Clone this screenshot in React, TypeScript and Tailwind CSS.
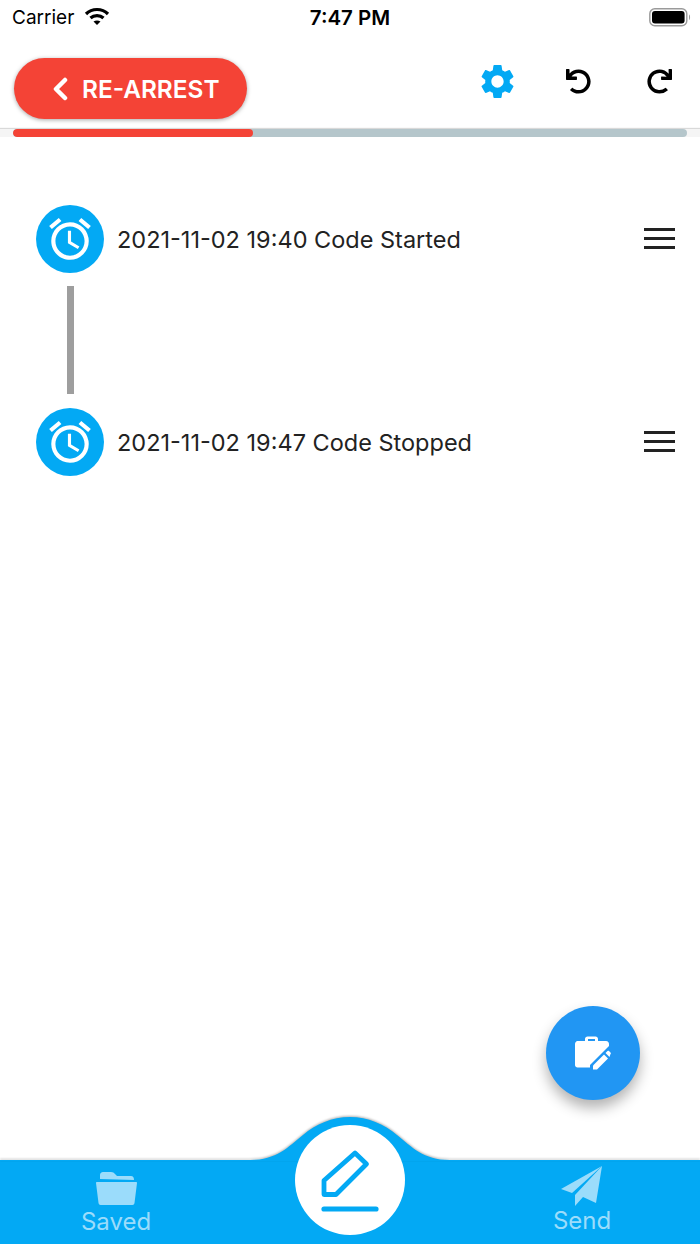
import { FaRedo, FaUndo } from "react-icons/fa";
import { MdAccessAlarm, MdSettings } from "react-icons/md";

const events = ["2021-11-02 19:40 Code Started", "2021-11-02 19:47 Code Stopped"];

function StatusBar() {
  return (
    <div className="relative flex h-[36px] items-center justify-between pl-3 pr-[9px] text-black font-['Inter',sans-serif]">
      <div className="flex items-center gap-[10px]">
        <span className="text-[19px] font-normal">Carrier</span>
        <svg width="26" height="19" viewBox="0 0 26 19" fill="none" stroke="black" strokeWidth="3.2" className="mb-1">
          <path d="M2 7 C8 1 18 1 24 7" />
          <path d="M6.5 11 C10 7.8 16 7.8 19.5 11" />
          <path d="M13 18 L9.5 14.6 C11.5 13 14.5 13 16.5 14.6 Z" fill="black" stroke="none" />
        </svg>
      </div>
      <span className="absolute left-0 right-0 text-center text-[20.5px] font-semibold">7:47 PM</span>
      <svg width="42" height="20" viewBox="0 0 42 20" fill="none">
        <rect x="0.8" y="0.8" width="37" height="17" rx="5" stroke="#9a9a9a" strokeWidth="1.4" />
        <rect x="3" y="3" width="32.6" height="12.6" rx="3" fill="black" />
        <path d="M40 6.5 C41.4 7 41.4 11.5 40 12 Z" fill="#9a9a9a" />
      </svg>
    </div>
  );
}

function Header() {
  return (
    <div className="flex h-[93px] items-center justify-between pl-[14px] pr-[20px] pt-[11px]">
      <button className="flex h-[61px] w-[233px] items-center gap-[14px] rounded-full bg-[#f44336] pl-[38px] pt-[2px] text-white shadow-[0_1px_4px_rgba(0,0,0,0.35)]">
        <svg width="16" height="24" viewBox="0 0 16 24" fill="none" stroke="white" strokeWidth="4.5" strokeLinecap="round" strokeLinejoin="round">
          <path d="M13 3 L4 12 L13 21" />
        </svg>
        <span className="text-[24.4px] font-semibold font-['Inter',sans-serif]">RE-ARREST</span>
      </button>
      <div className="mb-[14px] flex items-center gap-[40px]">
        <MdSettings size={41} className="text-[#03a9f4]" />
        <div className="flex w-[41px] justify-center">
          <FaUndo size={25} className="text-black" />
        </div>
        <div className="flex w-[41px] justify-center">
          <FaRedo size={25} className="text-black" />
        </div>
      </div>
    </div>
  );
}

function ProgressBar() {
  return (
    <div className="h-[8px] bg-[#f5f5f5] px-[13px] shadow-[0_-1px_1px_rgba(0,0,0,0.15)]">
      <div className="h-full overflow-hidden rounded-full bg-[#b5c6cb]">
        <div className="h-full w-[240px] rounded-full bg-[#f44336]" />
      </div>
    </div>
  );
}

function EventRow({ label }: { label: string }) {
  return (
    <div className="flex h-[68px] items-center pl-[36px] pr-[24px]">
      <div className="flex h-[68px] w-[68px] items-center justify-center rounded-full bg-[#03a9f4]">
        <MdAccessAlarm size={50} className="text-white" />
      </div>
      <span className="ml-[13px] flex-1 pt-[2px] text-[23.5px] text-[#222] font-['Inter',sans-serif]">{label}</span>
      <svg width="32" height="22" viewBox="0 0 32 22" fill="#222">
        <rect x="0" y="0" width="31" height="3" />
        <rect x="0" y="9" width="31" height="3" />
        <rect x="0" y="18" width="31" height="3" />
      </svg>
    </div>
  );
}

function Timeline() {
  return (
    <div className="pt-[68px]">
      <EventRow label={events[0]} />
      <div className="ml-[67px] mt-[13px] h-[108px] w-[7px] bg-[#9e9e9e]" />
      <div className="mt-[14px]">
        <EventRow label={events[1]} />
      </div>
    </div>
  );
}

function BriefcaseFab() {
  return (
    <button className="absolute bottom-[60px] right-[60px] flex h-[94px] w-[94px] items-center justify-center rounded-full bg-[#2196f3] shadow-[0_8px_14px_rgba(0,0,0,0.3)]">
      <svg width="36" height="34" viewBox="0 0 36 34" fill="white">
        <path d="M10 5 V3 C10 1.4 11.2 0.5 12.5 0.5 H20.5 C22 0.5 23 1.4 23 3 V5 H31 C33 5 34 6.5 34 8 V10 L15 29 L15 31.5 H2.5 C1.2 31.5 0 30.4 0 29 V8 C0 6.5 1.2 5 2.5 5 Z M13 5 H20 V3 H13 Z" fillRule="evenodd" />
        <path d="M18 29.5 L29 18.5 L33 22.5 L22 33.5 L18 33.5 Z" />
        <path d="M30.5 17 L32.5 15 C33 14.5 33.6 14.5 34 15 L35.5 16.5 C36 17 36 17.6 35.5 18 L34.5 21 Z" />
      </svg>
    </button>
  );
}

function TabBar() {
  return (
    <div className="relative h-[84px] bg-[#03a9f4]">
      <svg width="700" height="44" viewBox="0 0 700 44" className="absolute -top-[43px] left-0 drop-shadow-[0_-1px_1px_rgba(0,0,0,0.3)]">
        <path d="M0 44 V43 H250 C277 43 288 30 303 18 C316 7 332 0 350 0 C368 0 384 7 397 18 C412 30 423 43 450 43 H700 V44 Z" fill="#03a9f4" />
      </svg>
      <div className="absolute -top-[35px] left-[295px] flex h-[110px] w-[110px] items-center justify-center rounded-full bg-white">
        <svg width="58" height="64" viewBox="0 0 58 64" fill="none" stroke="#03a9f4" strokeWidth="4.8" strokeLinecap="round" strokeLinejoin="round">
          <path d="M3 32.5 L34 5 L45.5 16 L15 46.5 H3 Z" />
          <path d="M3 61 H55" strokeWidth="5.2" />
        </svg>
      </div>
      <div className="flex h-full items-start justify-between pl-[81px] pr-[89px] pt-[12px] font-['Inter',sans-serif] text-[24px] text-[#9bdcfb]">
        <div className="flex w-[70px] flex-col items-center">
          <svg width="41" height="33" viewBox="0 0 41 33" fill="#9bdcfb">
            <path d="M4 7 V3 C4 1.4 5.2 0 7 0 H15 C17 0 18 0.8 19 2 L21 4 H35 C37 4 38 5.5 38 8 Z" />
            <path d="M1 10 H40 C40.6 10 41 10.4 41 11 L38.5 31 C38.3 32.2 37.5 33 36.5 33 H4.5 C3.5 33 2.7 32.2 2.5 31 L0 11 C0 10.4 0.4 10 1 10 Z" />
          </svg>
          <span className="mt-[2px] leading-[30px]">Saved</span>
        </div>
        <div className="flex w-[58px] flex-col items-center">
          <svg width="42" height="41" viewBox="0 0 42 41" fill="#9bdcfb" className="-mt-[6px]">
            <path d="M41 0 L0 23 L11 27 Z" />
            <path d="M41 0 L14 29 L14 40 L22 31 L35 37 Z" />
          </svg>
          <span className="-mt-[1px] leading-[30px]">Send</span>
        </div>
      </div>
    </div>
  );
}

export default function App() {
  return (
    <div className="flex h-[1244px] w-[700px] flex-col overflow-hidden bg-white">
      <StatusBar />
      <Header />
      <ProgressBar />
      <div className="relative flex-1">
        <Timeline />
        <BriefcaseFab />
      </div>
      <TabBar />
    </div>
  );
}
